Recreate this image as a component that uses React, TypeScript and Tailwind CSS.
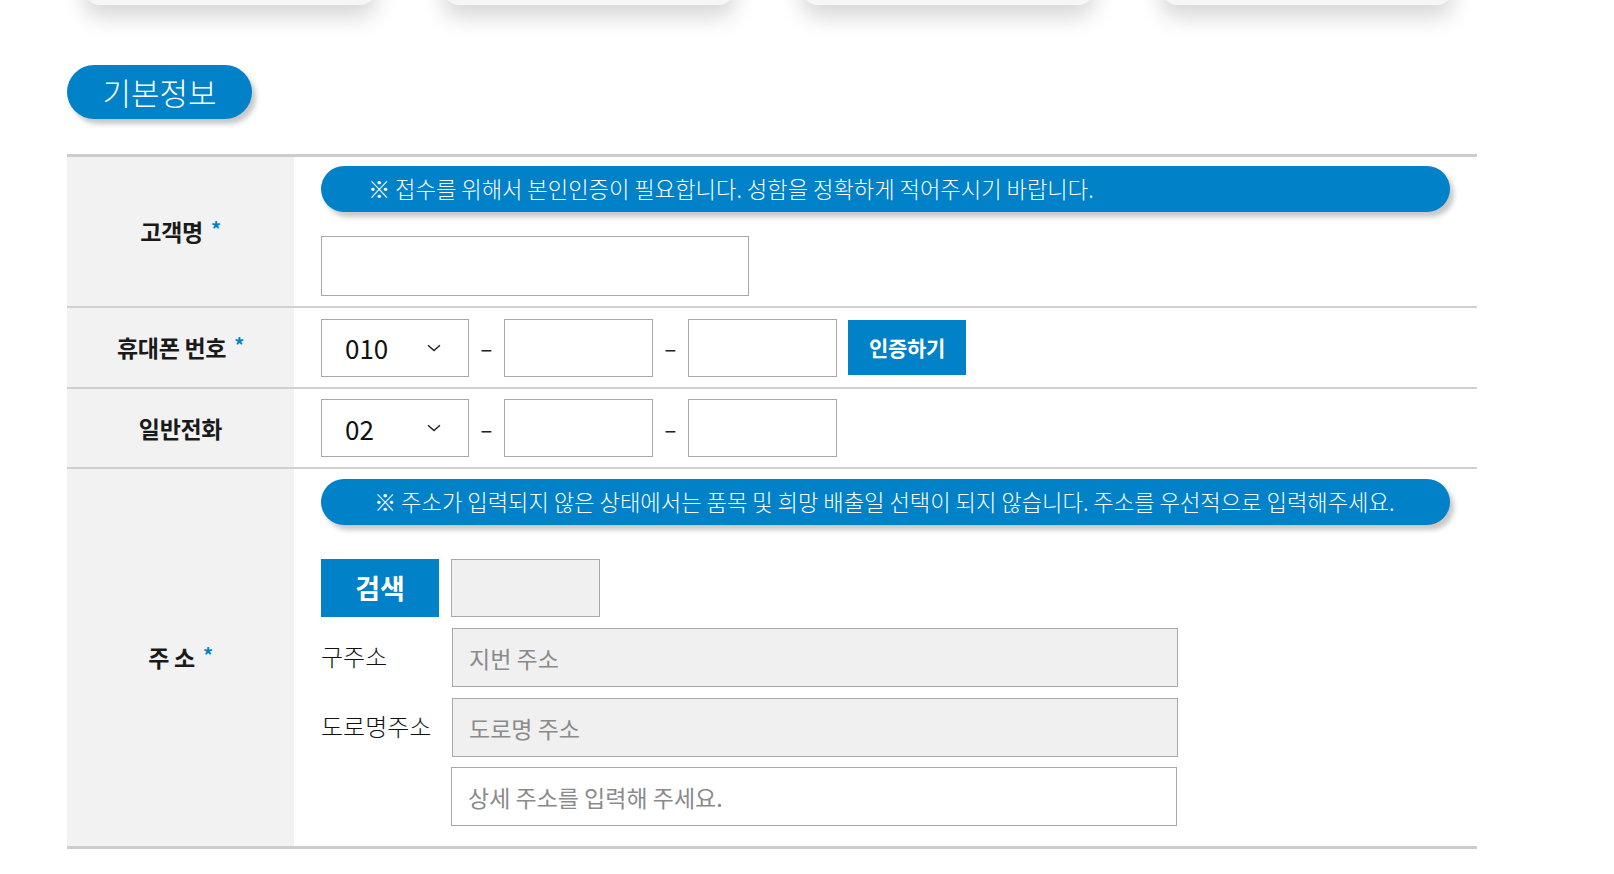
import React from 'react';

const font = "font-['Noto_Sans_CJK_KR','Noto_Sans',sans-serif]";

const Chevron = () => (
  <svg width="14" height="8" viewBox="0 0 14 8" fill="none" className="ml-auto mr-[27px]">
    <path d="M1 1.2L7 6.5L13 1.2" stroke="#222" strokeWidth="1.4" />
  </svg>
);

const Label = ({ text, required = false }: { text: string; required?: boolean }) => (
  <div className="bg-[#f2f2f2] flex items-center justify-center">
    <span className="text-[23px] font-bold text-[#1a1a1a] tracking-[-0.3px] flex items-center">
      {text}
      {required && <span className="ml-[8px] -mt-[6px] text-[20px] font-bold text-[#0081c8]">*</span>}
    </span>
  </div>
);

const Notice = ({ text, pad }: { text: string; pad: string }) => (
  <div
    className={`h-[46px] w-[1129px] rounded-full bg-[#0081c8] flex items-center ${pad} text-[22.2px] font-light text-white shadow-[4px_5px_5px_rgba(0,0,0,0.22)]`}
  >
    {text}
  </div>
);

const FakeSelect = ({ value }: { value: string }) => (
  <div className="w-[148px] h-[58px] border border-[#a8a8a8] bg-white flex items-center pl-[23px] text-[26px] text-[#111]">
    {value}
    <Chevron />
  </div>
);

const Dash = () => <span className="w-[35px] text-center text-[22px] text-[#222]">–</span>;

const Box = () => <input className="w-[149px] h-[58px] border border-[#a8a8a8] bg-white outline-none" />;

const PhoneRow = ({ value, button = false }: { value: string; button?: boolean }) => (
  <div className="flex items-center">
    <FakeSelect value={value} />
    <Dash />
    <Box />
    <Dash />
    <Box />
    {button && (
      <button className="ml-[11px] w-[118px] h-[55px] bg-[#0081c8] text-white text-[21px] font-bold tracking-[-0.3px]">
        인증하기
      </button>
    )}
  </div>
);

const AddrInput = ({ placeholder, gray = false }: { placeholder: string; gray?: boolean }) => (
  <input
    placeholder={placeholder}
    readOnly={gray}
    className={`w-[726px] h-[59px] border border-[#a8a8a8] pl-[16px] text-[23px] outline-none placeholder:text-[#8a8a8a] ${gray ? 'bg-[#f0f0f0]' : 'bg-white'}`}
  />
);

export default function App() {
  return (
    <div className={`min-h-screen bg-white overflow-hidden ${font}`}>
      <div className="ml-[67px] w-[1410px]">
        {/* cut-off cards from the section above */}
        <div className="flex gap-[67px] pl-[17px] -mt-[35px]">
          {[0, 1, 2, 3].map(i => (
            <div
              key={i}
              className="w-[292px] h-[40px] rounded-b-[16px] bg-[#f6f6f6] shadow-[0_12px_22px_rgba(0,0,0,0.16)]"
            />
          ))}
        </div>

        <div className="mt-[60px] w-[185px] h-[54px] rounded-full bg-[#0081c8] flex items-center justify-center text-[31px] font-light text-white shadow-[4px_5px_5px_rgba(0,0,0,0.22)]">
          기본정보
        </div>

        <div className="mt-[35px] border-t-[3px] border-b-[3px] border-[#cccccc]">
          {/* 고객명 */}
          <div className="grid grid-cols-[227px_1fr] border-b-2 border-[#d0d0d0]">
            <Label text="고객명" required />
            <div className="pl-[27px] pt-[9px] pb-[10px]">
              <Notice pad="pl-[47px]" text="※ 접수를 위해서 본인인증이 필요합니다. 성함을 정확하게 적어주시기 바랍니다." />
              <input className="mt-[24px] block w-[428px] h-[60px] border border-[#a8a8a8] bg-white outline-none" />
            </div>
          </div>

          {/* 휴대폰 번호 */}
          <div className="grid grid-cols-[227px_1fr] h-[81px] border-b-2 border-[#d0d0d0]">
            <Label text="휴대폰 번호" required />
            <div className="pl-[27px] flex items-center">
              <PhoneRow value="010" button />
            </div>
          </div>

          {/* 일반전화 */}
          <div className="grid grid-cols-[227px_1fr] h-[80px] border-b-2 border-[#d0d0d0]">
            <Label text="일반전화" />
            <div className="pl-[27px] flex items-center">
              <PhoneRow value="02" />
            </div>
          </div>

          {/* 주소 */}
          <div className="grid grid-cols-[227px_1fr]">
            <Label text="주 소" required />
            <div className="pl-[27px] pt-[10px] pb-[20px]">
              <Notice
                pad="pl-[53px]"
                text="※ 주소가 입력되지 않은 상태에서는 품목 및 희망 배출일 선택이 되지 않습니다. 주소를 우선적으로 입력해주세요."
              />
              <div className="mt-[34px] flex items-center gap-[12px]">
                <button className="w-[118px] h-[58px] bg-[#0081c8] text-white text-[27px] font-bold">검색</button>
                <div className="w-[149px] h-[58px] border border-[#a8a8a8] bg-[#f0f0f0]" />
              </div>
              <div className="mt-[11px] flex">
                <span className="w-[131px] pt-[10px] text-[24px] font-light text-[#111]">구주소</span>
                <AddrInput placeholder="지번 주소" gray />
              </div>
              <div className="mt-[11px] flex">
                <span className="w-[131px] pt-[10px] text-[24px] font-light text-[#111]">도로명주소</span>
                <AddrInput placeholder="도로명 주소" gray />
              </div>
              <div className="mt-[10px] flex">
                <span className="w-[130px]" />
                <AddrInput placeholder="상세 주소를 입력해 주세요." />
              </div>
            </div>
          </div>
        </div>
      </div>
    </div>
  );
}
